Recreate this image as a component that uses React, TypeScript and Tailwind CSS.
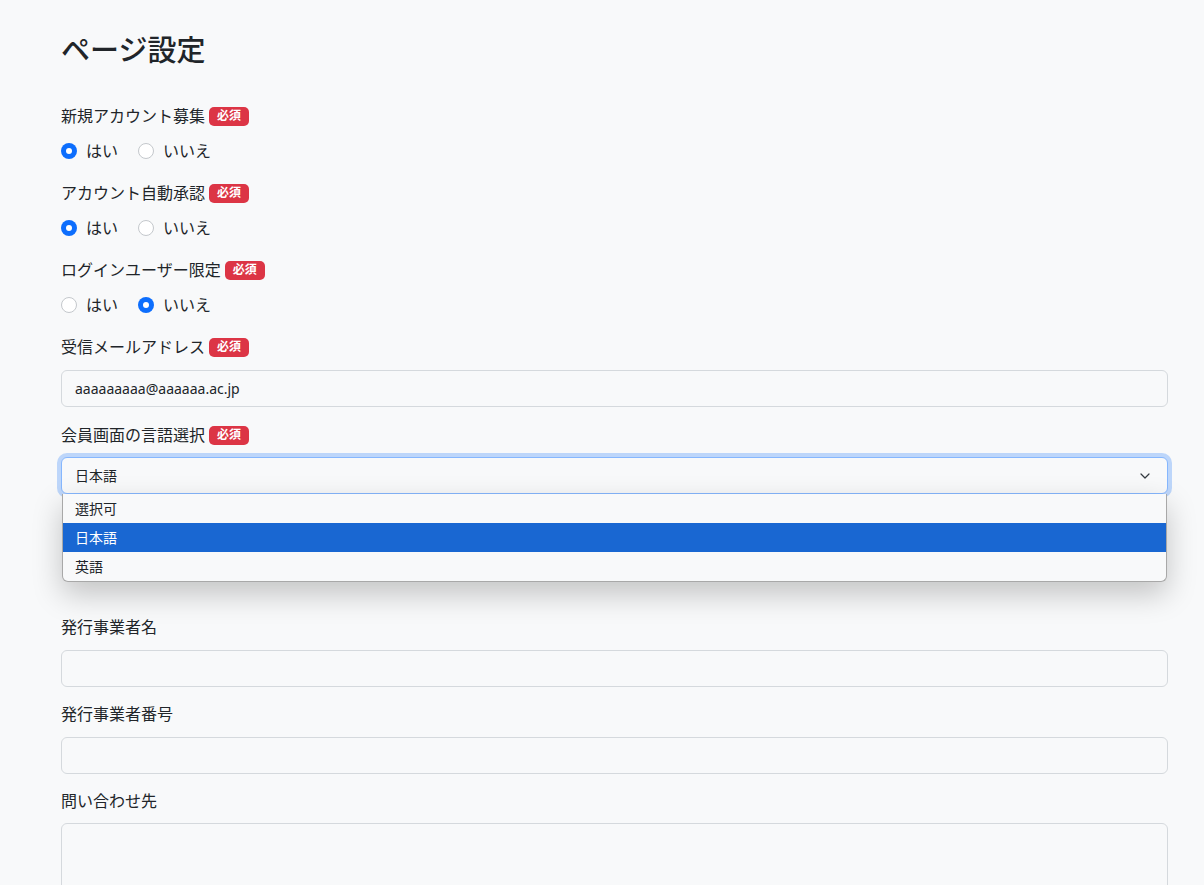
import { ChevronDown } from 'lucide-react'

const font = { fontFamily: '"Noto Sans", "Noto Sans CJK JP", sans-serif' }

function Badge() {
  return (
    <span className="ml-1 inline-flex h-[19px] items-center rounded-[5px] bg-[#dc3545] px-[8px] text-[12px] font-bold leading-none text-white">
      必須
    </span>
  )
}

function Label({ text, required }: { text: string; required?: boolean }) {
  return (
    <div className="flex h-6 items-center text-[16px] leading-6 text-[#212529]">
      <span>{text}</span>
      {required && <Badge />}
    </div>
  )
}

function Radio({ checked, label }: { checked: boolean; label: string }) {
  return (
    <label className="flex items-center gap-[9px]">
      {checked ? (
        <span className="flex h-4 w-4 items-center justify-center rounded-full bg-[#0d6efd]">
          <span className="h-[6px] w-[6px] rounded-full bg-white" />
        </span>
      ) : (
        <span className="h-4 w-4 rounded-full border border-[#c4c8cc] bg-white" />
      )}
      <span className="text-[16px] leading-6 text-[#212529]">{label}</span>
    </label>
  )
}

function RadioGroup({ label, yes }: { label: string; yes: boolean }) {
  return (
    <div className="mb-[18px]">
      <Label text={label} required />
      <div className="mt-[11px] flex h-6 items-center gap-[20px]">
        <Radio checked={yes} label="はい" />
        <Radio checked={!yes} label="いいえ" />
      </div>
    </div>
  )
}

function TextField({ label, value, required, mb = 'mb-[15px]' }: { label: string; value?: string; required?: boolean; mb?: string }) {
  return (
    <div className={mb}>
      <Label text={label} required={required} />
      <div className="mt-[11px] flex h-[37px] items-center rounded-[6px] border border-[#d5d9dd] bg-[#f8f9fa] px-[13px] text-[14px] text-[#212529]">
        {value}
      </div>
    </div>
  )
}

export default function App() {
  const options = ['選択可', '日本語', '英語']
  return (
    <div className="min-h-screen overflow-hidden bg-[#f8f9fa]" style={font}>
      <div className="ml-[61px] w-[1107px] pt-[30px]">
        <h1 className="mb-[34px] text-[29px] font-medium leading-[40px] text-[#212529]">ページ設定</h1>

        <RadioGroup label="新規アカウント募集" yes />
        <RadioGroup label="アカウント自動承認" yes />
        <RadioGroup label="ログインユーザー限定" yes={false} />

        <TextField label="受信メールアドレス" value="aaaaaaaaa@aaaaaa.ac.jp" required mb="mb-[16px]" />

        <div className="relative mb-[121px]">
          <Label text="会員画面の言語選択" required />
          <div className="mt-[10px] flex h-[37px] items-center justify-between rounded-[6px] border border-[#86b7fe] bg-[#f8f9fa] px-[13px] text-[14px] text-[#212529] shadow-[0_0_0_4px_rgba(13,110,253,0.25)]">
            <span>日本語</span>
            <ChevronDown size={16} strokeWidth={1.8} className="mr-[1px] text-[#343a40]" />
          </div>
          <div className="absolute left-[1px] right-[1px] top-[71px] z-10 overflow-hidden rounded-b-[6px] border border-t-0 border-[#a8a8a8] bg-[#f8f9fa] py-0 shadow-[0_12px_30px_rgba(0,0,0,0.22)]">
            {options.map((o) => (
              <div
                key={o}
                className={
                  o === '日本語'
                    ? 'flex h-[29px] items-center bg-[#1967d2] px-[12px] text-[14px] text-white'
                    : 'flex h-[29px] items-center px-[12px] text-[14px] text-[#212529]'
                }
              >
                {o}
              </div>
            ))}
          </div>
        </div>

        <TextField label="発行事業者名" />
        <TextField label="発行事業者番号" />

        <div>
          <Label text="問い合わせ先" />
          <div className="mt-[10px] h-[90px] rounded-[6px] border border-[#d5d9dd] bg-[#f8f9fa]" />
        </div>
      </div>
    </div>
  )
}
